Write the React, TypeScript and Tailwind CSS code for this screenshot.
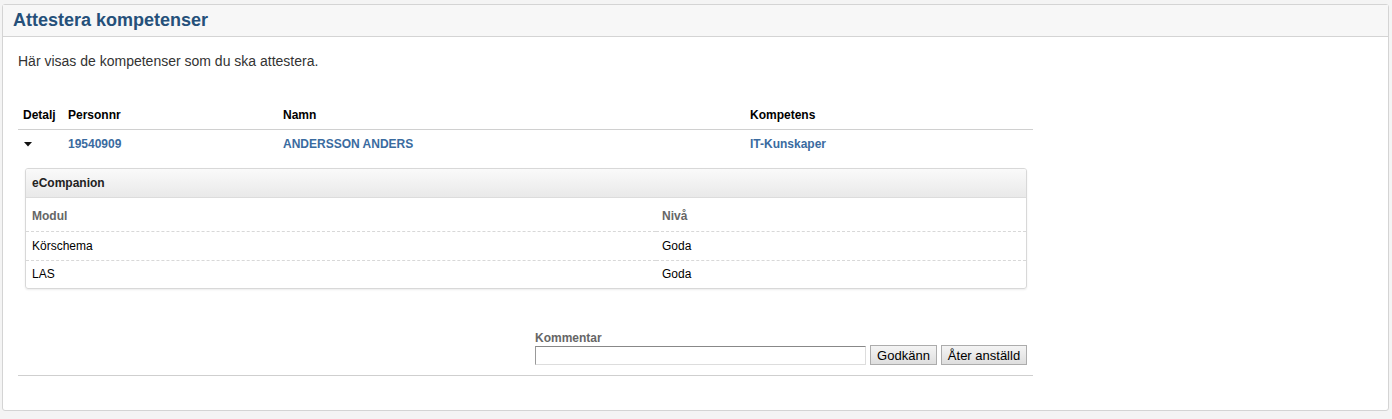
import { useState } from "react";

const rows = [
  { modul: "Körschema", niva: "Goda" },
  { modul: "LAS", niva: "Goda" },
];

export default function App() {
  const [comment, setComment] = useState("");

  return (
    <div className="min-h-[419px] bg-[#f4f4f4] pt-[4px] pb-[8px] font-['Liberation_Sans',Arial,sans-serif] text-[#333]">
      {/* Panel */}
      <div className="ml-[2px] mr-[3px] h-[407px] rounded-[3px] border border-[#d4d4d4] bg-white">
        <div className="flex h-[32px] items-center border-b border-[#d4d4d4] bg-[#f7f7f7] px-[10px]">
          <h1 className="text-[18px] font-bold text-[#25507a]">Attestera kompetenser</h1>
        </div>

        <div className="pl-[15px]">
          <p className="mt-[14px] h-[20px] text-[14px] leading-[20px] text-[#333]">
            Här visas de kompetenser som du ska attestera.
          </p>

          <div className="mt-[30px] w-[1015px]">
            <table className="w-full table-fixed border-collapse text-[12px]">
              <colgroup>
                <col className="w-[45px]" />
                <col className="w-[215px]" />
                <col className="w-[467px]" />
                <col />
              </colgroup>
              <thead>
                <tr className="h-[28px] border-b border-[#d0d0d0] text-left font-bold text-black">
                  <th className="pl-[5px]">Detalj</th>
                  <th className="pl-[5px]">Personnr</th>
                  <th className="pl-[5px]">Namn</th>
                  <th className="pl-[5px]">Kompetens</th>
                </tr>
              </thead>
              <tbody>
                <tr className="h-[28px] font-bold text-[#3a6ba0]">
                  <td className="pl-[6px] pt-[1px]">
                    <svg width="8" height="5" viewBox="0 0 8 5" className="mt-[1px]">
                      <path d="M0 0h8L4 4.5z" fill="#111" />
                    </svg>
                  </td>
                  <td className="pl-[5px] pt-[1px]">19540909</td>
                  <td className="pl-[5px] pt-[1px]">ANDERSSON ANDERS</td>
                  <td className="pl-[5px] pt-[1px]">IT-Kunskaper</td>
                </tr>
              </tbody>
            </table>

            {/* Detail panel */}
            <div className="ml-[7px] mt-[11px] w-[1002px] overflow-hidden rounded-[3px] border border-[#d8d8d8] shadow-[0_1px_2px_rgba(0,0,0,0.08)]">
              <div className="flex h-[29px] items-center border-b border-[#dcdcdc] bg-gradient-to-b from-[#fafafa] to-[#e9e9e9] px-[6px] text-[12px] font-bold text-[#222]">
                eCompanion
              </div>
              <table className="w-full table-fixed border-collapse text-[12px]">
                <colgroup>
                  <col className="w-[630px]" />
                  <col />
                </colgroup>
                <thead>
                  <tr className="h-[33px] border-b border-dashed border-[#d8d8d8] text-left font-bold text-[#666]">
                    <th className="pl-[6px] pt-[3px]">Modul</th>
                    <th className="pl-[6px] pt-[3px]">Nivå</th>
                  </tr>
                </thead>
                <tbody className="text-black">
                  {rows.map((r, i) => (
                    <tr
                      key={r.modul}
                      className={
                        i < rows.length - 1
                          ? "h-[29px] border-b border-dashed border-[#d8d8d8]"
                          : "h-[28px]"
                      }
                    >
                      <td className="pl-[6px]">{r.modul}</td>
                      <td className="pl-[6px]">{r.niva}</td>
                    </tr>
                  ))}
                </tbody>
              </table>
            </div>

            {/* Comment + actions */}
            <div className="mt-[43px] flex justify-end pr-[6px] pb-[10px] border-b border-[#cfcfcf]">
              <div className="flex flex-col">
                <label className="text-[12px] font-bold leading-[13px] text-[#666]">Kommentar</label>
                <div className="flex items-center gap-[4px]">
                  <input
                    value={comment}
                    onChange={(e) => setComment(e.target.value)}
                    className="h-[19px] w-[331px] border border-[#ddd] border-t-[#888] border-l-[#999] bg-white px-[2px] text-[12px] outline-none"
                  />
                  <button className="h-[20px] w-[67px] border border-[#acacac] bg-gradient-to-b from-[#f4f4f4] to-[#dedede] text-[13px] leading-none text-black">
                    Godkänn
                  </button>
                  <button className="h-[20px] w-[86px] border border-[#acacac] bg-gradient-to-b from-[#f4f4f4] to-[#dedede] text-[13px] leading-none text-black">
                    Åter anställd
                  </button>
                </div>
              </div>
            </div>
          </div>
        </div>
      </div>
    </div>
  );
}
